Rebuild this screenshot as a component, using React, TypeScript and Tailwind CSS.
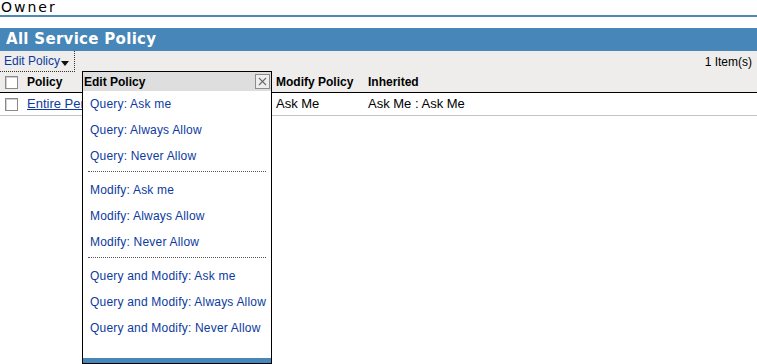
import { X } from 'lucide-react';

const groups = [
  ['Query: Ask me', 'Query: Always Allow', 'Query: Never Allow'],
  ['Modify: Ask me', 'Modify: Always Allow', 'Modify: Never Allow'],
  ['Query and Modify: Ask me', 'Query and Modify: Always Allow', 'Query and Modify: Never Allow'],
];

const Box = () => (
  <span className="block w-[13px] h-[13px] border border-[#8a8a8a] bg-white shadow-[inset_1px_1px_0_#d0d0d0]" />
);

const EditPolicyMenu = () => (
  <div className="absolute left-[82px] top-[71px] w-[190px] h-[293px] bg-white border border-black flex flex-col">
    <div className="h-[19px] bg-[#dedede] flex items-center justify-between pl-[1px] pr-[1px]">
      <span className="font-bold text-[12px] text-black">Edit Policy</span>
      <span className="w-[15px] h-[15px] border border-[#8c8c8c] bg-[#eeeeee] flex items-center justify-center">
        <X className="w-[13px] h-[13px] text-[#6a6a6a]" strokeWidth={2} />
      </span>
    </div>
    <div className="flex-1">
      {groups.map((g, gi) => (
        <div key={gi}>
          {gi > 0 && <div className="mx-[5px] mt-[2px] mb-[5px] border-t border-dotted border-[#555]" />}
          {g.map((item) => (
            <div key={item} className="h-[26px] flex items-center pl-[7px] text-[12px] tracking-[0.2px] text-[#0c3aa0]">
              {item}
            </div>
          ))}
        </div>
      ))}
    </div>
    <div className="h-[5px] bg-[#4686b8]" />
  </div>
);

export default function App() {
  return (
    <div className="relative w-[757px] h-[364px] bg-white overflow-hidden font-['Liberation_Sans',Arial,sans-serif]">
      <div className="h-[17px] border-b-2 border-[#4a8ab9] pl-[1px] text-[14px] leading-[15px] tracking-[2px] text-black font-['DejaVu_Sans',sans-serif]">
        Owner
      </div>
      <div className="mt-[11px] h-[23px] bg-[#4686b8] flex items-center px-[6px] text-white font-bold text-[15px] tracking-[0.3px] font-['DejaVu_Sans',sans-serif]">
        All Service Policy
      </div>
      <div className="h-[21px] bg-[#eeedeb] flex items-center justify-between text-[12px]">
        <span className="h-[21px] w-[75px] border-r border-b border-dotted border-[#333] flex items-center pl-[4px] text-[#0c3aa0]">
          Edit Policy
          <svg width="8" height="5" viewBox="0 0 8 5" className="ml-[1px] mt-[4px]"><path d="M0 0h8L4 5z" fill="#111" /></svg>
        </span>
        <span className="pr-[5px] text-black">1 Item(s)</span>
      </div>
      <div className="h-[21px] bg-[#eeedeb] border-b border-black flex items-center text-[12px] font-bold text-black">
        <span className="w-[27px] pl-[5px]"><Box /></span>
        <span className="w-[249px]">Policy</span>
        <span className="w-[92px]">Modify Policy</span>
        <span>Inherited</span>
      </div>
      <div className="h-[23px] border-b border-[#c4c4c4] flex items-center text-[13px] text-black">
        <span className="w-[27px] pl-[5px]"><Box /></span>
        <span className="w-[249px] text-[#0c3aa0] underline">Entire Permission Set</span>
        <span className="w-[92px]">Ask Me</span>
        <span>Ask Me : Ask Me</span>
      </div>
      <EditPolicyMenu />
    </div>
  );
}
